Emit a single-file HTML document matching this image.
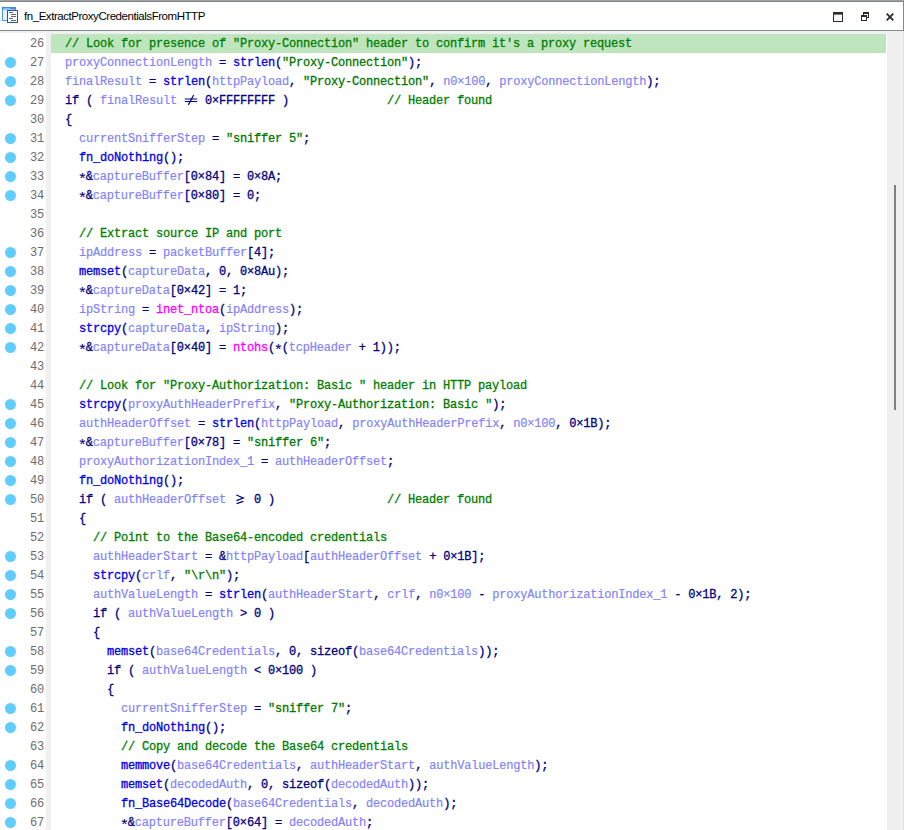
<!DOCTYPE html>
<html><head><meta charset="utf-8"><title>fn_ExtractProxyCredentialsFromHTTP</title>
<style>
html,body{margin:0;padding:0;}
body{width:904px;height:830px;background:#fff;position:relative;overflow:hidden;font-family:"Liberation Mono",monospace;}
#title{position:absolute;left:0;top:0;width:904px;height:31px;background:#fff;}
#title:before{content:"";position:absolute;left:0;top:0;width:904px;height:1px;background:#a0a0a0;}
#title:after{content:"";position:absolute;left:0;top:1px;width:903px;height:30px;border:1px solid #828790;border-left:0;box-sizing:border-box;width:904px;}
#title .txt{position:absolute;left:24px;top:8px;font-family:"Liberation Sans",sans-serif;font-size:11.5px;line-height:16px;color:#000;white-space:nowrap;letter-spacing:-0.45px;}
#under{position:absolute;left:0;top:31px;width:904px;height:3px;background:#f0f0f0;}
#gut{position:absolute;left:46px;top:33px;width:5px;height:797px;background:#f0f0f0;}
#gutw{position:absolute;left:0;top:33px;width:46px;height:797px;background:#fff;}
#sb{position:absolute;left:887px;top:31px;width:17px;height:799px;background:#f0f0f0;}
#sb i{position:absolute;left:7px;top:154px;width:2px;height:225px;background:#7f7f7f;}
#sbr{position:absolute;left:903px;top:31px;width:1px;height:799px;background:#e2e2e2;}
.ln{position:absolute;left:0;width:887px;height:19px;}
.ln.hl:before{content:"";position:absolute;left:51px;top:0;width:835px;height:19px;background:#bfe5bf;}
.dot{position:absolute;left:5px;top:4px;width:11px;height:11px;border-radius:50%;background:#5fcdff;}
.no{position:absolute;left:0;top:1px;width:44px;text-align:right;font-style:normal;font-size:12px;line-height:19px;letter-spacing:-0.2px;color:#6c6c6c;}
pre{position:absolute;left:65px;top:1px;-webkit-text-stroke:0.3px currentColor;margin:0;font-family:"Liberation Mono",monospace;font-size:12px;line-height:19px;letter-spacing:-0.2px;color:#000080;white-space:pre;}
c{color:#008000;} v{color:#8282fa;-webkit-text-stroke:0.18px currentColor;} s{color:#007800;text-decoration:none;} m{color:#ff00ff;} f{color:#0000e8;}
l{display:inline-block;width:14px;text-align:center;letter-spacing:0;transform:scaleX(1.6);}
a{display:inline-block;width:6.8px;height:0;line-height:0;font-size:15.5px;letter-spacing:0;text-indent:-1.3px;position:relative;top:3.5px;vertical-align:baseline;-webkit-text-stroke:0.1px currentColor;}
svg{position:absolute;}
</style></head><body>
<div id="title">
<svg style="left:0;top:0" width="24" height="30" viewBox="0 0 24 30">
<defs><linearGradient id="g1" x1="0" y1="0" x2="1" y2="0"><stop offset="0" stop-color="#2d8ff5"/><stop offset="1" stop-color="#4f86e0"/></linearGradient></defs>
<rect x="2.5" y="7.5" width="13" height="13" fill="#eaf4ff" stroke="#4596ec"/>
<rect x="2" y="7" width="14" height="2.5" fill="url(#g1)"/>
<rect x="3.5" y="8" width="7" height="0.8" fill="#9ccaff"/>
<rect x="7.5" y="10.5" width="10" height="12" fill="#fdfeff" stroke="#2257a8"/>
<path d="M9 12.5h4M11 14.5h5M11 16.5h5M9 18.5h4M11 20.5h5" stroke="#6a6a6a" stroke-width="1"/>
</svg>
<div class="txt">fn_ExtractProxyCredentialsFromHTTP</div>
<svg style="left:833px;top:12px" width="10" height="10" viewBox="0 0 10 10"><rect x="0.5" y="0.5" width="9" height="9" fill="#fafafa" stroke="#2b2b2b"/><rect x="0" y="0" width="10" height="2.6" fill="#2b2b2b"/></svg>
<svg style="left:861px;top:12px" width="8" height="9" viewBox="0 0 8 9"><path d="M2 0h6v2h-6zM7 0h1v6h-1zM6 5h2v1h-2zM2 0h1v3h-1z" fill="#2b2b2b"/><path d="M0 3h6v2h-6zM0 3h1v6h-1zM5 3h1v6h-1zM0 8h6v1h-6z" fill="#2b2b2b"/></svg>
<svg style="left:886px;top:13px" width="8" height="8" viewBox="0 0 8 8"><path d="M0.7 0.7L7.3 7.3M7.3 0.7L0.7 7.3" stroke="#2b2b2b" stroke-width="1.8"/></svg>
</div>
<div id="under"></div>
<div id="gutw"></div><div id="gut"></div>
<div class="ln hl" style="top:34px"><i class="no">26</i><pre><c>// Look for presence of "Proxy-Connection" header to confirm it's a proxy request</c></pre></div>
<div class="ln" style="top:53px"><b class="dot"></b><i class="no">27</i><pre><v>proxyConnectionLength</v> = <f>strlen</f>(<s>"Proxy-Connection"</s>);</pre></div>
<div class="ln" style="top:72px"><b class="dot"></b><i class="no">28</i><pre><v>finalResult</v> = <f>strlen</f>(<v>httpPayload</v>, <s>"Proxy-Connection"</s>, <v>n0<x>×</x>100</v>, <v>proxyConnectionLength</v>);</pre></div>
<div class="ln" style="top:91px"><b class="dot"></b><i class="no">29</i><pre>if ( <v>finalResult</v>    0<x>×</x>FFFFFFFF )              <c>// Header found</c></pre><svg class="lg" style="left:184px;top:0" width="14" height="19" viewBox="0 0 14 19"><path d="M0.8 8h12.4M0.8 10.5h12.4" stroke="#000080" stroke-width="1.1" fill="none"/><path d="M9.7 4L4.3 13.9" stroke="#000080" stroke-width="1.2" fill="none"/></svg></div>
<div class="ln" style="top:110px"><i class="no">30</i><pre>{</pre></div>
<div class="ln" style="top:129px"><b class="dot"></b><i class="no">31</i><pre>  <v>currentSnifferStep</v> = <s>"sniffer 5"</s>;</pre></div>
<div class="ln" style="top:148px"><b class="dot"></b><i class="no">32</i><pre>  <f>fn_doNothing</f>();</pre></div>
<div class="ln" style="top:167px"><b class="dot"></b><i class="no">33</i><pre>  <a>*</a>&amp;<v>captureBuffer</v>[0<x>×</x>84] = 0<x>×</x>8A;</pre></div>
<div class="ln" style="top:186px"><b class="dot"></b><i class="no">34</i><pre>  <a>*</a>&amp;<v>captureBuffer</v>[0<x>×</x>80] = 0;</pre></div>
<div class="ln" style="top:205px"><i class="no">35</i><pre></pre></div>
<div class="ln" style="top:224px"><i class="no">36</i><pre>  <c>// Extract source IP and port</c></pre></div>
<div class="ln" style="top:243px"><b class="dot"></b><i class="no">37</i><pre>  <v>ipAddress</v> = <v>packetBuffer</v>[4];</pre></div>
<div class="ln" style="top:262px"><b class="dot"></b><i class="no">38</i><pre>  <f>memset</f>(<v>captureData</v>, 0, 0<x>×</x>8Au);</pre></div>
<div class="ln" style="top:281px"><b class="dot"></b><i class="no">39</i><pre>  <a>*</a>&amp;<v>captureData</v>[0<x>×</x>42] = 1;</pre></div>
<div class="ln" style="top:300px"><b class="dot"></b><i class="no">40</i><pre>  <v>ipString</v> = <m>inet_ntoa</m>(<v>ipAddress</v>);</pre></div>
<div class="ln" style="top:319px"><b class="dot"></b><i class="no">41</i><pre>  <f>strcpy</f>(<v>captureData</v>, <v>ipString</v>);</pre></div>
<div class="ln" style="top:338px"><b class="dot"></b><i class="no">42</i><pre>  <a>*</a>&amp;<v>captureData</v>[0<x>×</x>40] = <m>ntohs</m>(<a>*</a>(<v>tcpHeader</v> + 1));</pre></div>
<div class="ln" style="top:357px"><i class="no">43</i><pre></pre></div>
<div class="ln" style="top:376px"><i class="no">44</i><pre>  <c>// Look for "Proxy-Authorization: Basic " header in HTTP payload</c></pre></div>
<div class="ln" style="top:395px"><b class="dot"></b><i class="no">45</i><pre>  <f>strcpy</f>(<v>proxyAuthHeaderPrefix</v>, <s>"Proxy-Authorization: Basic "</s>);</pre></div>
<div class="ln" style="top:414px"><b class="dot"></b><i class="no">46</i><pre>  <v>authHeaderOffset</v> = <f>strlen</f>(<v>httpPayload</v>, <v>proxyAuthHeaderPrefix</v>, <v>n0<x>×</x>100</v>, 0<x>×</x>1B);</pre></div>
<div class="ln" style="top:433px"><b class="dot"></b><i class="no">47</i><pre>  <a>*</a>&amp;<v>captureBuffer</v>[0<x>×</x>78] = <s>"sniffer 6"</s>;</pre></div>
<div class="ln" style="top:452px"><b class="dot"></b><i class="no">48</i><pre>  <v>proxyAuthorizationIndex_1</v> = <v>authHeaderOffset</v>;</pre></div>
<div class="ln" style="top:471px"><b class="dot"></b><i class="no">49</i><pre>  <f>fn_doNothing</f>();</pre></div>
<div class="ln" style="top:490px"><b class="dot"></b><i class="no">50</i><pre>  if ( <v>authHeaderOffset</v>    0 )                <c>// Header found</c></pre><svg class="lg" style="left:233px;top:0" width="14" height="19" viewBox="0 0 14 19"><path d="M3.3 5L10.3 8L3.5 10.7M3.6 13.7L10.3 11.3" stroke="#000080" stroke-width="1.25" fill="none"/></svg></div>
<div class="ln" style="top:509px"><i class="no">51</i><pre>  {</pre></div>
<div class="ln" style="top:528px"><i class="no">52</i><pre>    <c>// Point to the Base64-encoded credentials</c></pre></div>
<div class="ln" style="top:547px"><b class="dot"></b><i class="no">53</i><pre>    <v>authHeaderStart</v> = &amp;<v>httpPayload</v>[<v>authHeaderOffset</v> + 0<x>×</x>1B];</pre></div>
<div class="ln" style="top:566px"><b class="dot"></b><i class="no">54</i><pre>    <f>strcpy</f>(<v>crlf</v>, <s>"\r\n"</s>);</pre></div>
<div class="ln" style="top:585px"><b class="dot"></b><i class="no">55</i><pre>    <v>authValueLength</v> = <f>strlen</f>(<v>authHeaderStart</v>, <v>crlf</v>, <v>n0<x>×</x>100</v> - <v>proxyAuthorizationIndex_1</v> - 0<x>×</x>1B, 2);</pre></div>
<div class="ln" style="top:604px"><b class="dot"></b><i class="no">56</i><pre>    if ( <v>authValueLength</v> &gt; 0 )</pre></div>
<div class="ln" style="top:623px"><i class="no">57</i><pre>    {</pre></div>
<div class="ln" style="top:642px"><b class="dot"></b><i class="no">58</i><pre>      <f>memset</f>(<v>base64Credentials</v>, 0, sizeof(<v>base64Credentials</v>));</pre></div>
<div class="ln" style="top:661px"><b class="dot"></b><i class="no">59</i><pre>      if ( <v>authValueLength</v> &lt; 0<x>×</x>100 )</pre></div>
<div class="ln" style="top:680px"><i class="no">60</i><pre>      {</pre></div>
<div class="ln" style="top:699px"><b class="dot"></b><i class="no">61</i><pre>        <v>currentSnifferStep</v> = <s>"sniffer 7"</s>;</pre></div>
<div class="ln" style="top:718px"><b class="dot"></b><i class="no">62</i><pre>        <f>fn_doNothing</f>();</pre></div>
<div class="ln" style="top:737px"><i class="no">63</i><pre>        <c>// Copy and decode the Base64 credentials</c></pre></div>
<div class="ln" style="top:756px"><b class="dot"></b><i class="no">64</i><pre>        <f>memmove</f>(<v>base64Credentials</v>, <v>authHeaderStart</v>, <v>authValueLength</v>);</pre></div>
<div class="ln" style="top:775px"><b class="dot"></b><i class="no">65</i><pre>        <f>memset</f>(<v>decodedAuth</v>, 0, sizeof(<v>decodedAuth</v>));</pre></div>
<div class="ln" style="top:794px"><b class="dot"></b><i class="no">66</i><pre>        <f>fn_Base64Decode</f>(<v>base64Credentials</v>, <v>decodedAuth</v>);</pre></div>
<div class="ln" style="top:813px"><b class="dot"></b><i class="no">67</i><pre>        <a>*</a>&amp;<v>captureBuffer</v>[0<x>×</x>64] = <v>decodedAuth</v>;</pre></div>
<div id="sb"><i></i></div><div id="sbr"></div>
</body></html>
